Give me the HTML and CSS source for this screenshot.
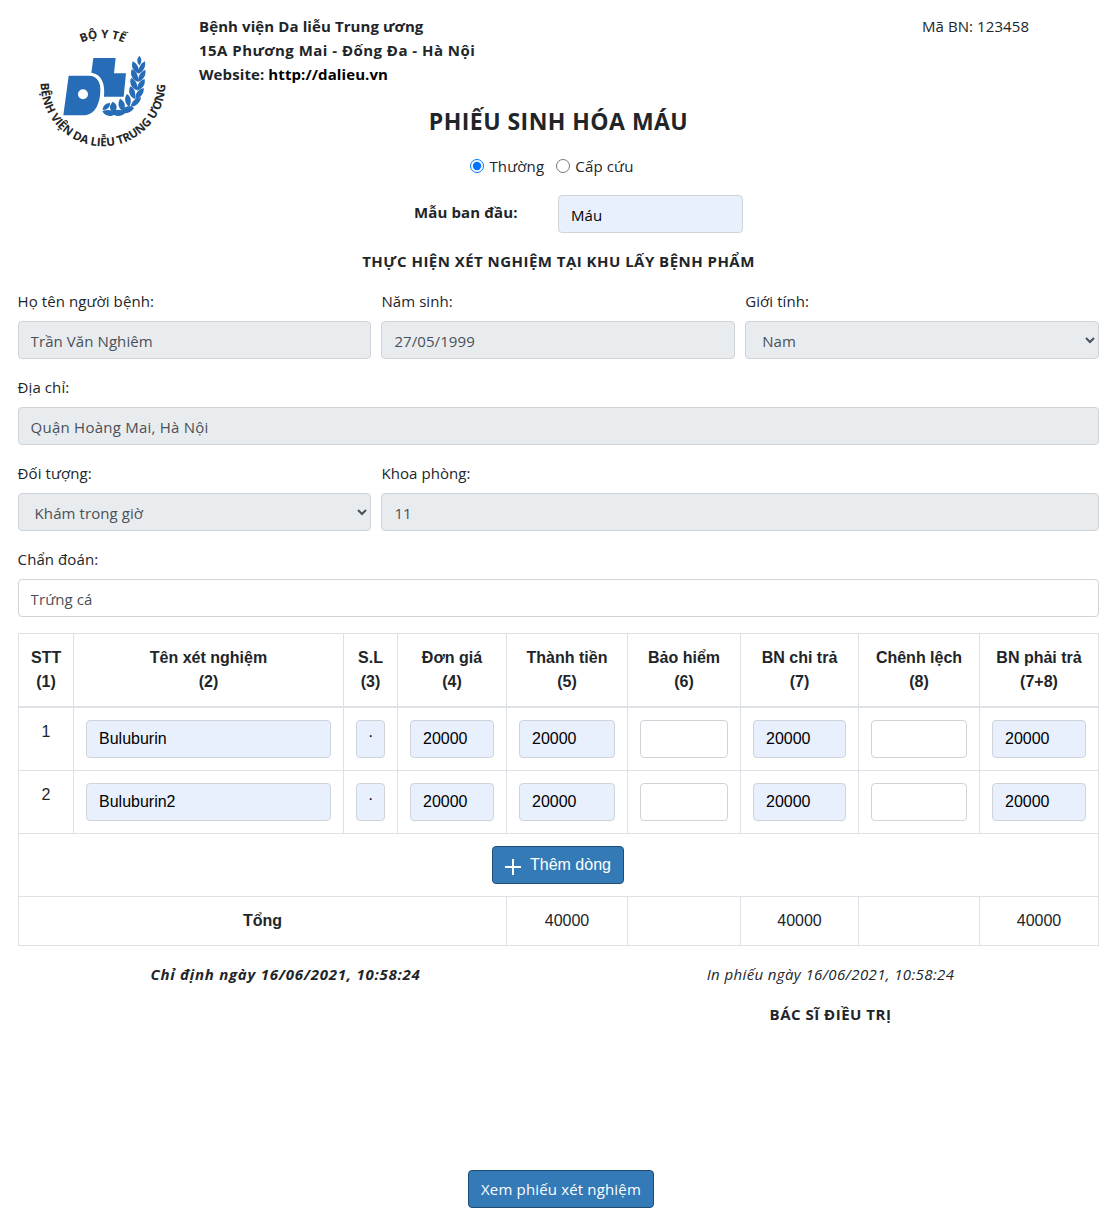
FILE: index.html
```html
<!DOCTYPE html>
<html lang="vi">
<head>
<meta charset="utf-8">
<title>Phiếu sinh hóa máu</title>
<link rel="stylesheet" href="styles.css">
</head>
<body>
<main class="page">
  <header class="head">
    <svg class="logo" viewBox="0 0 510 450" role="img" aria-label="Logo">
      <defs>
        <path id="arc-top" d="M98 232A150 148 0 0 1 398 232"/>
        <path id="arc-bottom" d="M62 219A187 190 0 0 0 436 219"/>
      </defs>
      <text class="logo-text" text-anchor="middle"><textPath href="#arc-top" startOffset="50%">BỘ Y TẾ</textPath></text>
      <text class="logo-text"><textPath href="#arc-bottom" textLength="588" lengthAdjust="spacing">BỆNH VIỆN DA LIỄU TRUNG ƯƠNG</textPath></text>
      <g class="logo-mark">
        <path d="M146 197H207C232 197 243 218 241 245C239 283 225 316 188 316H130ZM189 238A15 15 0 1 0 189 268A15 15 0 1 0 189 238Z" fill-rule="evenodd"/>
        <path d="M220 144H287L282 190H318L311 260H252C256 220 245 193 214 188Z"/>
        <path d="M358 137C350 146 350 156 358 166C366 156 366 146 358 137Z"/>
        <path d="M338 154C332 172 340 184 356 191C359 174 352 161 338 154ZM375 154C361 161 354 174 357 191C371 184 378 170 375 154Z"/>
        <path d="M335 178C329 197 338 210 354 216C357 198 350 184 335 178ZM376 179C360 186 353 200 355 216C371 209 379 195 376 179Z"/>
        <path d="M333 204C327 221 335 235 351 241C354 223 348 210 333 204ZM374 207C358 212 350 225 352 242C368 236 377 224 374 207Z"/>
        <path d="M331 229C323 245 329 260 344 267C349 249 344 235 331 229ZM371 234C354 238 345 251 346 268C363 263 373 250 371 234Z"/>
        <path d="M321 252C311 266 315 282 328 291C336 274 333 260 321 252ZM363 262C346 263 335 275 332 291C349 289 361 278 363 262Z"/>
        <path d="M300 266C291 282 296 298 311 303C319 287 314 273 300 266ZM342 294C328 284 312 290 302 305C317 314 333 309 342 294Z"/>
        <path d="M278 275C266 288 267 302 283 308C294 295 292 282 278 275ZM316 308C303 295 286 297 274 309C286 321 304 321 316 308Z"/>
        <path d="M270 279C256 279 249 288 248 300C261 300 271 293 270 279ZM287 311C274 298 261 298 247 304C255 320 274 322 287 311Z"/>
      </g>
    </svg>
    <div class="hospital">
      <div class="name">Bệnh viện Da liễu Trung ương</div>
      <div class="address">15A Phương Mai - Đống Đa - Hà Nội</div>
      <div class="name">Website: <span class="link">http://dalieu.vn</span></div>
    </div>
    <div class="code">Mã BN: 123458</div>
  </header>
  <h1 class="title">PHIẾU SINH HÓA MÁU</h1>
  <div class="radios">
    <label class="radio"><input type="radio" name="kind" checked><span>Thường</span></label>
    <label class="radio"><input type="radio" name="kind"><span>Cấp cứu</span></label>
  </div>
  <div class="sample">
    <label class="sample-label" for="sample">Mẫu ban đầu:</label>
    <input class="control filled sample-input" id="sample" value="Máu">
  </div>
  <h2 class="subtitle">THỰC HIỆN XÉT NGHIỆM TẠI KHU LẤY BỆNH PHẨM</h2>
  <form class="fields">
    <label class="field"><span>Họ tên người bệnh:</span><input class="control readonly" readonly value="Trần Văn Nghiêm"></label>
    <label class="field"><span>Năm sinh:</span><input class="control readonly" readonly value="27/05/1999"></label>
    <label class="field"><span>Giới tính:</span><select class="control readonly"><option>Nam</option></select></label>
    <label class="field full"><span>Địa chỉ:</span><input class="control readonly place" readonly value="Quận Hoàng Mai, Hà Nội"></label>
    <label class="field"><span>Đối tượng:</span><select class="control readonly"><option>Khám trong giờ</option></select></label>
    <label class="field wide"><span>Khoa phòng:</span><input class="control readonly" readonly value="11"></label>
    <label class="field full"><span>Chẩn đoán:</span><input class="control" value="Trứng cá"></label>
  </form>
  <table class="tests">
    <colgroup><col class="c1"><col class="c2"><col class="c3"><col class="c4"><col class="c5"><col class="c6"><col class="c7"><col class="c8"><col class="c9"></colgroup>
    <thead>
      <tr><th>STT<br>(1)</th><th>Tên xét nghiệm<br>(2)</th><th>S.L<br>(3)</th><th>Đơn giá<br>(4)</th><th>Thành tiền<br>(5)</th><th>Bảo hiểm<br>(6)</th><th>BN chi trả<br>(7)</th><th>Chênh lệch<br>(8)</th><th>BN phải trả<br>(7+8)</th></tr>
    </thead>
    <tbody>
      <tr><td>1</td><td><input class="control filled" value="Buluburin"></td><td><input class="control filled qty" value="·"></td><td><input class="control filled" value="20000"></td><td><input class="control filled" value="20000"></td><td><input class="control"></td><td><input class="control filled" value="20000"></td><td><input class="control"></td><td><input class="control filled" value="20000"></td></tr>
      <tr><td>2</td><td><input class="control filled" value="Buluburin2"></td><td><input class="control filled qty" value="·"></td><td><input class="control filled" value="20000"></td><td><input class="control filled" value="20000"></td><td><input class="control"></td><td><input class="control filled" value="20000"></td><td><input class="control"></td><td><input class="control filled" value="20000"></td></tr>
      <tr><td colspan="9"><button class="btn add" type="button"><svg class="plus" viewBox="0 0 16 16"><path d="M8 0V16M0 8H16"/></svg>Thêm dòng</button></td></tr>
      <tr><th colspan="4">Tổng</th><td>40000</td><td></td><td>40000</td><td></td><td>40000</td></tr>
    </tbody>
  </table>
  <div class="signs">
    <div class="ordered">Chỉ định ngày 16/06/2021, 10:58:24</div>
    <div class="printed"><div class="print-date">In phiếu ngày 16/06/2021, 10:58:24</div><div class="doctor">BÁC SĨ ĐIỀU TRỊ</div></div>
  </div>
  <footer class="foot"><button class="btn view" type="button">Xem phiếu xét nghiệm</button></footer>
</main>
</body>
</html>
```
FILE: styles.css
```css
* { box-sizing: border-box; }
body { margin: 0; background: #fff; color: #212529; font: 15px/24px "Open Sans", "Noto Sans", sans-serif; letter-spacing: .08px; }
.page { width: 1118px; height: 1213px; padding: 10px 19px 0 18px; overflow: hidden; }
.head { display: flex; height: 95px; }
.logo { width: 170px; height: 150px; flex: none; margin-left: 2px; }
.logo-text { font: 700 35px "Open Sans", sans-serif; letter-spacing: 0; fill: #252525; }
.logo-mark { fill: #276cb6; }
.hospital { flex: 1; padding: 4px 0 0 9px; font-weight: 700; }
.name { letter-spacing: .1px; }
.address { letter-spacing: .47px; }
.link { color: #000; }
.code { width: 177px; padding-top: 4px; }
.title { margin: 0; font-size: 23px; line-height: 33px; font-weight: 700; letter-spacing: .46px; text-align: center; }
.radios { display: flex; justify-content: center; gap: 12px; margin-top: 16px; padding-right: 13px; }
.radio { display: flex; align-items: center; gap: 5px; letter-spacing: .16px; }
.radio input { width: 14px; height: 14px; margin: 0; }
.sample { display: flex; margin: 17px 0 0 396px; }
.sample-label { width: 144px; padding-top: 5px; font-weight: 700; letter-spacing: .12px; }
.control { display: block; width: 100%; height: 38px; padding: 8px 12px 6px; border: 1px solid #ced4da; border-radius: 4px; background: #fff; color: #495057; font: inherit; letter-spacing: inherit; outline: 0; }
.filled { background: #e8f0fe; color: #000; }
.readonly { background: #e9ecef; }
.place { letter-spacing: .24px; }
.sample-input { width: 185px; }
.subtitle { margin: 16px 0; font-size: 15px; line-height: 24px; letter-spacing: .47px; text-align: center; }
.fields { display: grid; grid-template-columns: repeat(3, 1fr); column-gap: 10px; row-gap: 16px; margin-left: -.4px; }
.field > span { display: block; margin-bottom: 8px; }
.wide { grid-column: span 2; }
.full { grid-column: 1 / -1; }
.tests { width: 1081px; margin-top: 16px; border-collapse: collapse; table-layout: fixed; font: 16px/24px "Liberation Sans", Arial, sans-serif; letter-spacing: 0; text-align: center; }
.tests th, .tests td { padding: 12px; border: 1px solid #dee2e6; vertical-align: top; }
.tests thead th { border-bottom-width: 2px; }
.tests .control { padding: 6px 12px; }
.tests .qty { padding: 3px 11px 9px; }
.c1 { width: 55px; }
.c2 { width: 270px; }
.c3 { width: 54px; }
.c4 { width: 109px; }
.c5 { width: 121px; }
.c6 { width: 113px; }
.c7 { width: 118px; }
.c8 { width: 121px; }
.c9 { width: 119px; }
.btn { height: 38px; padding: 0 12px; border: 1px solid #204d74; border-radius: 4px; background: #337ab7; color: #fff; font: inherit; }
.add { display: inline-flex; align-items: center; width: 132px; margin-right: 1px; white-space: nowrap; vertical-align: top; }
.plus { flex: none; width: 16px; height: 16px; margin: 3px 9px 0 0; fill: none; stroke: #fff; stroke-width: 2; }
.signs { display: flex; margin-top: 16px; text-align: center; font-style: italic; }
.ordered { width: 535px; font-weight: 700; letter-spacing: .74px; }
.printed { width: 555px; letter-spacing: .38px; }
.doctor { margin-top: 16px; font-weight: 700; font-style: normal; letter-spacing: .5px; }
.ordered, .printed { flex: none; }
.foot { display: flex; justify-content: center; margin-top: 144px; padding-left: 5px; }
.view { width: 186px; letter-spacing: .16px; }
```
